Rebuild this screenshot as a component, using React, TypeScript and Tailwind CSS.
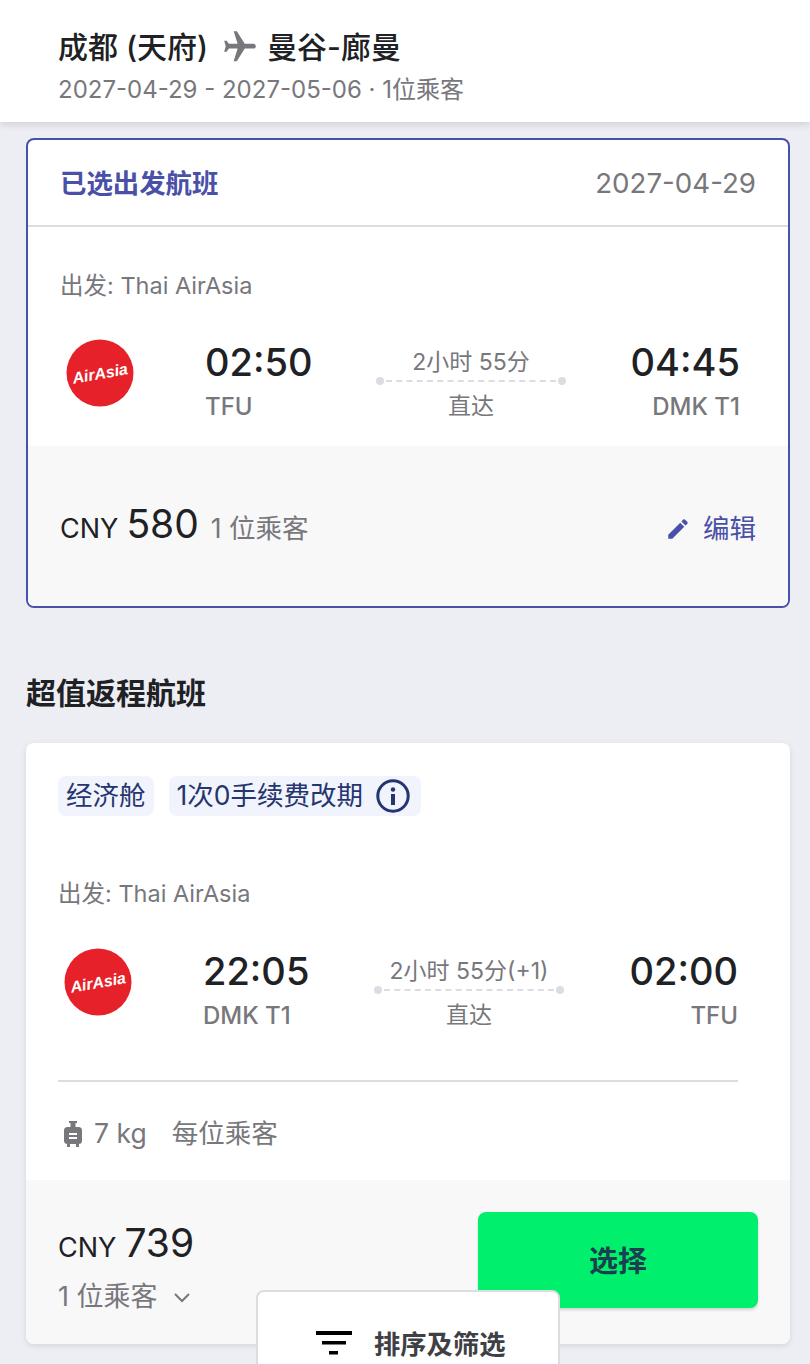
const F = { fontFamily: '"Inter","Noto Sans CJK SC",sans-serif' };

function Logo() {
  return (
    <svg width="68" height="68" viewBox="0 0 68 68" className="block">
      <circle cx="34" cy="34" r="33.5" fill="#e62129" />
      <text x="34" y="40" textAnchor="middle" fill="#fff" fontFamily='"Liberation Sans",sans-serif' fontStyle="italic" fontWeight="700" fontSize="16" transform="rotate(-10 34 34)">AirAsia</text>
    </svg>
  );
}

function Row({ dep, arr, from, to, dur, lineCls }: { dep: string; arr: string; from: string; to: string; dur: string; lineCls: string }) {
  return (
    <div className="flex items-start">
      <div className="w-[145px] pl-[6px] pt-[1px]"><Logo /></div>
      <div className="w-[171px]">
        <div className="text-[38px] leading-[48px] font-medium text-[#202124]">{dep}</div>
        <div className="text-[24px] leading-[32px] font-medium text-[#77777c] mt-[5px]">{from}</div>
      </div>
      <div className="w-[190px] flex flex-col items-center">
        <div className="text-[23px] leading-[30px] text-[#77777c] mt-[9px] whitespace-nowrap">{dur}</div>
        <div className={`flex items-center h-[8px] ${lineCls}`}>
          <span className="w-[8px] h-[8px] rounded-full bg-[#dcdce3] shrink-0" />
          <span className="flex-1 border-t-2 border-dashed border-[#dcdce3] mx-[2px]" />
          <span className="w-[8px] h-[8px] rounded-full bg-[#dcdce3] shrink-0" />
        </div>
        <div className="text-[23px] leading-[32px] text-[#77777c] mt-[5px]">直达</div>
      </div>
      <div className="w-[174px] text-right">
        <div className="text-[38px] leading-[48px] font-medium text-[#202124]">{arr}</div>
        <div className="text-[24px] leading-[32px] font-medium text-[#77777c] mt-[5px]">{to}</div>
      </div>
    </div>
  );
}

export default function App() {
  return (
    <div style={F} className="relative w-[810px] h-[1364px] overflow-hidden bg-[#eceef3]">
      <header className="h-[122px] bg-white pl-[58px] pt-[26px] shadow-[0_2px_8px_rgba(0,0,0,0.14)]">
        <div className="flex items-center text-[30px] leading-[42px] font-medium text-[#202124]">
          <span>成都 (天府)</span>
          <svg width="38" height="38" viewBox="0 0 24 24" className="ml-[13px] mr-[8px] rotate-90" fill="#77777c"><path d="M21 16v-2l-8-5V3.5c0-.83-.67-1.5-1.5-1.5S10 2.67 10 3.5V9l-8 5v2l8-2.5V19l-2 1.5V22l3.5-1 3.5 1v-1.5L13 19v-5.5l8 2.5z" /></svg>
          <span>曼谷-廊曼</span>
        </div>
        <div className="text-[24px] leading-[32px] text-[#77777c] mt-[6px]">2027-04-29 - 2027-05-06 · 1位乘客</div>
      </header>

      <section className="ml-[26px] mr-[20px] mt-[16px] h-[470px] border-2 border-[#4a50a8] rounded-[8px] overflow-hidden bg-white flex flex-col">
        <div className="h-[87px] flex items-center justify-between pl-[32px] pr-[32px] pt-[2px] border-b-2 border-[#dcdce3]">
          <span className="text-[26.4px] font-semibold text-[#4a50a8]">已选出发航班</span>
          <span className="text-[27.7px] text-[#77777c]">2027-04-29</span>
        </div>
        <div className="h-[219px] pl-[32px] pt-[43px]">
          <div className="text-[23.5px] leading-[32px] text-[#77777c]">出发: Thai AirAsia</div>
          <div className="mt-[36px]"><Row dep="02:50" arr="04:45" from="TFU" to="DMK T1" dur="2小时 55分" lineCls="w-[190px]" /></div>
        </div>
        <div className="flex-1 bg-[#f8f8f9] flex items-start justify-between pl-[32px] pr-[32px] pt-[49px]">
          <div className="flex items-baseline text-[#202124]">
            <span className="text-[27px]">CNY</span>
            <span className="text-[39px] ml-[8px]">580</span>
            <span className="text-[26.5px] text-[#77777c] ml-[12px]">1 位乘客</span>
          </div>
          <div className="flex items-center mt-[14px] text-[26.5px] text-[#4a50a8]">
            <svg width="26" height="26" viewBox="0 0 24 24" fill="#4a50a8" className="mr-[12px]"><path d="M3 17.25V21h3.75L17.81 9.94l-3.75-3.75L3 17.25zM20.71 7.04c.39-.39.39-1.02 0-1.41l-2.34-2.34c-.39-.39-1.02-.39-1.41 0l-1.83 1.83 3.75 3.75 1.83-1.83z" /></svg>
            编辑
          </div>
        </div>
      </section>

      <h2 className="ml-[26px] mt-[64px] text-[30px] leading-[42px] font-semibold text-[#202124]">超值返程航班</h2>

      <section className="ml-[26px] mr-[20px] mt-[29px] h-[601px] rounded-[8px] overflow-hidden bg-white flex flex-col shadow-[0_2px_6px_rgba(0,0,0,0.1)]">
        <div className="flex-1 pl-[32px] pr-[52px] pt-[33px]">
          <div className="flex gap-[15px] text-[26.5px] text-[#253570]">
            <span className="h-[40px] px-[8px] rounded-[8px] bg-[#f1f4fc] flex items-center">经济舱</span>
            <span className="h-[40px] pl-[8px] pr-[11px] rounded-[8px] bg-[#f1f4fc] flex items-center">
              1次0手续费改期
              <svg width="34" height="34" viewBox="0 0 34 34" className="ml-[13px]" fill="none">
                <circle cx="17" cy="17" r="15.2" stroke="#253570" strokeWidth="3" />
                <circle cx="17" cy="10.5" r="2.2" fill="#253570" />
                <rect x="15" y="15" width="4" height="11" fill="#253570" />
              </svg>
            </span>
          </div>
          <div className="text-[23.5px] leading-[32px] text-[#77777c] mt-[62px]">出发: Thai AirAsia</div>
          <div className="mt-[37px]"><Row dep="22:05" arr="02:00" from="DMK T1" to="TFU" dur="2小时 55分(+1)" lineCls="w-[190px]" /></div>
          <div className="border-t-2 border-[#dcdce3] mt-[48px]" />
          <div className="flex items-center h-[36px] mt-[34px] text-[26.5px] text-[#77777c]">
            <svg width="24" height="28" viewBox="0 0 24 28" fill="#77777c" className="ml-[3px] mr-[9px]">
              <path d="M8 1h8v2h-1.5v4h-5V3H8z" />
              <rect x="3" y="7" width="18" height="17" rx="3.5" />
              <rect x="8" y="13" width="8" height="2" fill="#fff" />
              <rect x="8" y="17" width="8" height="2" fill="#fff" />
              <rect x="6" y="24" width="3" height="3" /><rect x="15" y="24" width="3" height="3" />
            </svg>
            <span>7 kg</span>
            <span className="ml-[25px]">每位乘客</span>
          </div>
        </div>
        <div className="h-[164px] bg-[#f8f8f9] flex justify-between pl-[32px] pr-[32px] pt-[32px]">
          <div>
            <div className="flex items-baseline text-[#202124] h-[48px] pt-[2px]">
              <span className="text-[27px]">CNY</span>
              <span className="text-[39px] ml-[8px]">739</span>
            </div>
            <div className="flex items-center h-[40px] mt-[17px] text-[27px] text-[#77777c]">
              1 位乘客
              <svg width="18" height="18" viewBox="0 0 18 18" fill="none" stroke="#77777c" strokeWidth="2" className="ml-[15px] mt-[2px]"><path d="M2 5l7 7 7-7" /></svg>
            </div>
          </div>
          <button className="w-[280px] h-[96px] rounded-[8px] bg-[#00ef6c] text-[29px] font-semibold text-[#1b3f4f] pt-[4px] shadow-[0_2px_3px_rgba(0,0,0,0.15)]">选择</button>
        </div>
      </section>

      <div className="absolute left-[256px] top-[1290px] w-[304px] h-[90px] bg-white border-2 border-[#dcdce3] rounded-t-[8px] flex items-start pl-[58px] pt-[35px]">
        <svg width="36" height="28" viewBox="0 0 36 28" fill="#000" className="mt-[2px]">
          <rect x="0" y="2" width="36" height="4" /><rect x="6" y="12" width="24" height="3.5" /><rect x="13" y="22" width="9" height="3.5" />
        </svg>
        <span className="ml-[22px] text-[26.3px] leading-[36px] font-semibold text-[#3f3f46]">排序及筛选</span>
      </div>
    </div>
  );
}
